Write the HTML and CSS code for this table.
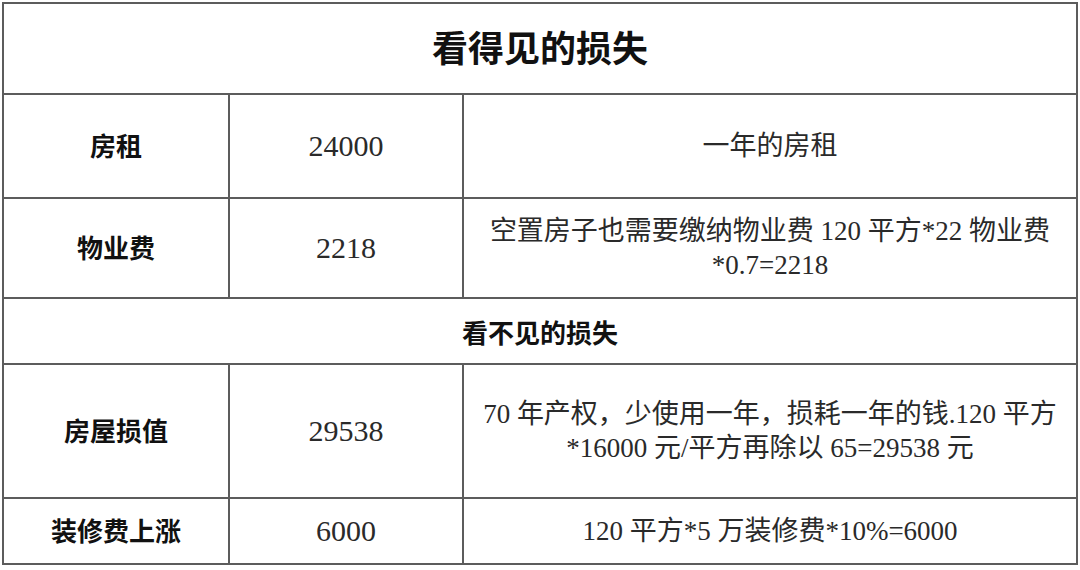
FILE: index.html
```html
<!DOCTYPE html>
<html lang="zh-CN">
<head>
<meta charset="utf-8">
<title>损失</title>
<link rel="stylesheet" href="styles.css">
</head>
<body>
<div class="sheet">
  <div class="cell title span3">看得见的损失</div>

  <div class="cell label r1">房租</div>
  <div class="cell value r1">24000</div>
  <div class="cell desc r1">一年的房租</div>

  <div class="cell label r2">物业费</div>
  <div class="cell value r2">2218</div>
  <div class="cell desc r2">空置房子也需要缴纳物业费 120 平方*22 物业费 *0.7=2218</div>

  <div class="cell subtitle span3">看不见的损失</div>

  <div class="cell label r3">房屋损值</div>
  <div class="cell value r3">29538</div>
  <div class="cell desc r3">70 年产权，少使用一年，损耗一年的钱.120 平方 *16000 元/平方再除以 65=29538 元</div>

  <div class="cell label r4">装修费上涨</div>
  <div class="cell value r4">6000</div>
  <div class="cell desc r4">120 平方*5 万装修费*10%=6000</div>
</div>
</body>
</html>
```
FILE: styles.css
```css
html, body {
  margin: 0;
  padding: 0;
  background: #ffffff;
}

body {
  padding: 2px 0 0 2px;
}

.sheet {
  display: grid;
  grid-template-columns: 226px 234px 614px;
  grid-template-rows: 91px 104px 100px 66px 134px 66px;
  width: 1074px;
  border-top: 2px solid #5c5c5c;
  border-left: 2px solid #5c5c5c;
}

.cell {
  box-sizing: border-box;
  border-right: 2px solid #5c5c5c;
  border-bottom: 2px solid #5c5c5c;
  display: flex;
  align-items: center;
  justify-content: center;
  text-align: center;
  color: #1e1e1e;
}

.span3 {
  grid-column: 1 / 4;
}

.title {
  font-family: "Noto Sans CJK SC", sans-serif;
  font-weight: 700;
  font-size: 36px;
  color: #111;
  padding-bottom: 5px;
}

.subtitle {
  font-family: "Noto Sans CJK SC", sans-serif;
  font-weight: 700;
  font-size: 26px;
  color: #111;
}

.label {
  font-family: "Noto Sans CJK SC", sans-serif;
  font-weight: 700;
  font-size: 26px;
  color: #111;
  padding-bottom: 3px;
}

.value {
  font-family: "Liberation Serif", "Times New Roman", "DejaVu Serif", serif;
  font-size: 30px;
  color: #2a2a2a;
}

.desc {
  font-family: "Liberation Serif", "Times New Roman", "Noto Sans CJK SC", serif;
  font-weight: 400;
  font-size: 27px;
  line-height: 34px;
  padding: 0 10px;
  color: #2a2a2a;
}
```
